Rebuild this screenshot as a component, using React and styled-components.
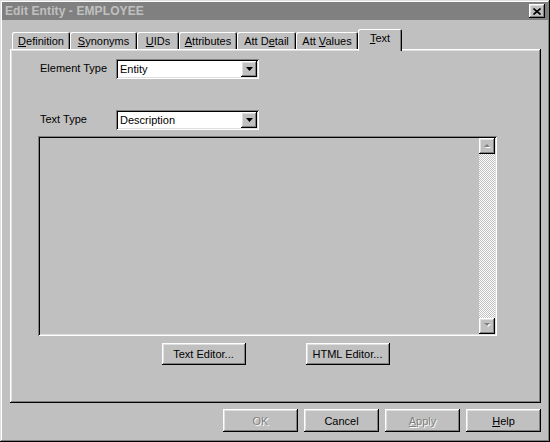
import styled, { createGlobalStyle } from "styled-components";

const GlobalStyle = createGlobalStyle`
  body {
    margin: 0;
    background: #c0c0c0;
    font-family: "Liberation Sans", Arial, sans-serif;
    font-size: 11px;
    color: #000;
  }
`;

const raised = `
  box-shadow: inset -1px -1px #000, inset 1px 1px #fff,
    inset -2px -2px #808080, inset 2px 2px #dfdfdf;
`;

const sunken = `
  box-shadow: inset 1px 1px #808080, inset -1px -1px #fff,
    inset 2px 2px #000, inset -2px -2px #dfdfdf;
`;

const Window = styled.div`
  width: 550px;
  height: 442px;
  box-sizing: border-box;
  padding: 2px;
  display: flex;
  flex-direction: column;
  background: #c0c0c0;
  box-shadow: inset -1px -1px #000, inset 1px 1px #dfdfdf,
    inset -2px -2px #808080, inset 2px 2px #fff;
`;

const TitleBar = styled.div`
  height: 18px;
  display: flex;
  align-items: center;
  justify-content: space-between;
  padding: 0 3px 0 3px;
  background: #808080;
`;

const Title = styled.span`
  color: #c0c0c0;
  font-weight: bold;
  font-size: 12px;
  letter-spacing: 0.1px;
`;

const CloseButton = styled.div`
  width: 16px;
  height: 14px;
  display: flex;
  align-items: center;
  justify-content: center;
  background: #c0c0c0;
  ${raised}
`;

const Body = styled.div`
  flex: 1;
  display: flex;
  flex-direction: column;
  padding: 9px 7px 0 8px;
`;

const TabStrip = styled.div`
  height: 20px;
  display: flex;
  align-items: flex-end;
  padding-left: 2px;
  position: relative;
  z-index: 1;
`;

const Tab = styled.div`
  width: ${(p) => p.$w}px;
  height: ${(p) => (p.$active ? 22 : 17)}px;
  margin-bottom: ${(p) => (p.$active ? -2 : 0)}px;
  box-sizing: border-box;
  display: flex;
  align-items: ${(p) => (p.$active ? "flex-start" : "center")};
  justify-content: center;
  padding-top: ${(p) => (p.$active ? 3 : 0)}px;
  background: #c0c0c0;
  border-radius: 2px 2px 0 0;
  box-shadow: inset 1px 1px #fff, inset -1px 0 #000, inset -2px 0 #808080;
`;

const Panel = styled.div`
  height: 354px;
  box-sizing: border-box;
  padding-top: 10px;
  display: flex;
  flex-direction: column;
  ${raised}
`;

const FieldRow = styled.div`
  display: flex;
  align-items: center;
  margin-left: 30px;
  margin-top: ${(p) => p.$top || 0}px;
`;

const Label = styled.span`
  width: 76px;
  margin-top: -2px;
`;

const Select = styled.div`
  width: 143px;
  height: 20px;
  box-sizing: border-box;
  padding: 2px;
  display: flex;
  align-items: center;
  background: #fff;
  ${sunken}
`;

const SelectValue = styled.span`
  flex: 1;
  padding-left: 2px;
`;

const ArrowButton = styled.div`
  width: 16px;
  height: 16px;
  display: flex;
  align-items: center;
  justify-content: center;
  background: #c0c0c0;
  ${raised}
`;

const Memo = styled.div`
  width: 459px;
  height: 200px;
  box-sizing: border-box;
  margin: 6px 0 0 28px;
  padding: 2px;
  display: flex;
  justify-content: flex-end;
  background: #c0c0c0;
  ${sunken}
`;

const ScrollBar = styled.div`
  width: 16px;
  display: flex;
  flex-direction: column;
`;

const ScrollTrack = styled.div`
  flex: 1;
  background: repeating-conic-gradient(#c0c0c0 0 25%, #fff 0 50%) 0 0 / 2px 2px;
`;

const EditorRow = styled.div`
  display: flex;
  justify-content: center;
  gap: 60px;
  margin-top: 7px;
`;

const Button = styled.div`
  width: ${(p) => p.$w}px;
  height: ${(p) => p.$h}px;
  box-sizing: border-box;
  display: flex;
  align-items: center;
  justify-content: center;
  background: #c0c0c0;
  color: ${(p) => (p.$disabled ? "#808080" : "#000")};
  text-shadow: ${(p) => (p.$disabled ? "1px 1px 0 #fff" : "none")};
  ${raised}
`;

const Footer = styled.div`
  display: flex;
  justify-content: flex-end;
  gap: 6px;
  margin-top: 6px;
`;

const U = styled.span`
  text-decoration: underline;
`;

const DownTriangle = ({ color = "#000" }) => (
  <svg width="7" height="4" viewBox="0 0 7 4">
    <path d="M0 0h7L3.5 4z" fill={color} />
  </svg>
);

const ScrollArrow = ({ up }) => (
  <ArrowButton>
    <svg width="9" height="6" viewBox="0 0 9 6">
      <path d={up ? "M2 5h6L5 2z" : "M2 1h6L5 4z"} fill="#fff" />
      <path d={up ? "M1 4h6L4 1z" : "M1 0h6L4 3z"} fill="#808080" />
    </svg>
  </ArrowButton>
);

const tabs = [
  { w: 58, label: <><U>D</U>efinition</> },
  { w: 67, label: <><U>S</U>ynonyms</> },
  { w: 42, label: <><U>U</U>IDs</> },
  { w: 58, label: <><U>A</U>ttributes</> },
  { w: 59, label: <>Att D<U>e</U>tail</> },
  { w: 62, label: <>Att <U>V</U>alues</> },
  { w: 44, label: <><U>T</U>ext</>, active: true },
];

export default function App() {
  return (
    <>
      <GlobalStyle />
      <Window>
        <TitleBar>
          <Title>Edit Entity - EMPLOYEE</Title>
          <CloseButton>
            <svg width="8" height="7" viewBox="0 0 8 7">
              <path d="M0.5 0.5l7 6M7.5 0.5l-7 6" stroke="#000" strokeWidth="1.6" />
            </svg>
          </CloseButton>
        </TitleBar>
        <Body>
          <TabStrip>
            {tabs.map((t, i) => (
              <Tab key={i} $w={t.w} $active={t.active}>
                <span>{t.label}</span>
              </Tab>
            ))}
          </TabStrip>
          <Panel>
            <FieldRow>
              <Label>Element Type</Label>
              <Select>
                <SelectValue>Entity</SelectValue>
                <ArrowButton>
                  <DownTriangle />
                </ArrowButton>
              </Select>
            </FieldRow>
            <FieldRow $top={31}>
              <Label>Text Type</Label>
              <Select>
                <SelectValue>Description</SelectValue>
                <ArrowButton>
                  <DownTriangle />
                </ArrowButton>
              </Select>
            </FieldRow>
            <Memo>
              <ScrollBar>
                <ScrollArrow up />
                <ScrollTrack />
                <ScrollArrow />
              </ScrollBar>
            </Memo>
            <EditorRow>
              <Button $w={84} $h={22}>Text Editor...</Button>
              <Button $w={84} $h={22}>HTML Editor...</Button>
            </EditorRow>
          </Panel>
          <Footer>
            <Button $w={75} $h={23} $disabled>OK</Button>
            <Button $w={75} $h={23}>Cancel</Button>
            <Button $w={75} $h={23} $disabled>
              <span><U>A</U>pply</span>
            </Button>
            <Button $w={75} $h={23}>
              <span><U>H</U>elp</span>
            </Button>
          </Footer>
        </Body>
      </Window>
    </>
  );
}
